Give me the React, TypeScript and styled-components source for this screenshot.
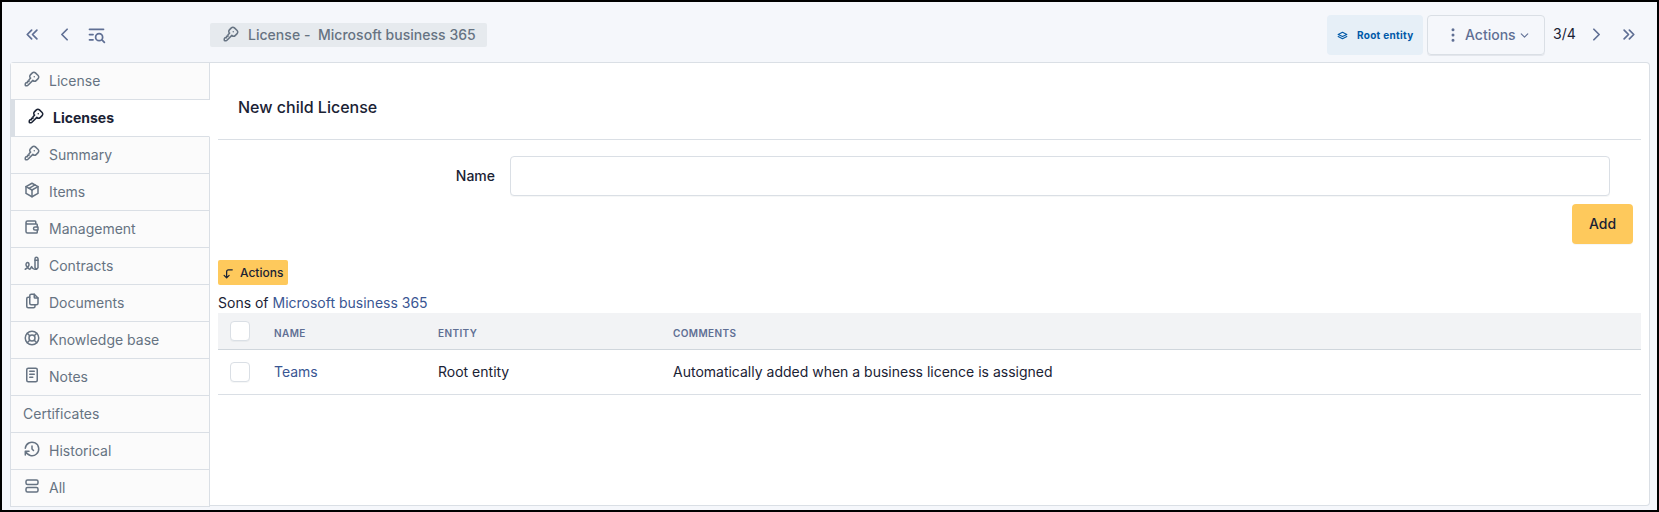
import React from "react";
import styled, { createGlobalStyle, css } from "styled-components";
import {
  TbChevronDown,
  TbChevronLeft,
  TbChevronRight,
  TbChevronsLeft,
  TbChevronsRight,
  TbCornerLeftDown,
  TbDotsVertical,
  TbFiles,
  TbHistory,
  TbKey,
  TbLayoutList,
  TbLifebuoy,
  TbListSearch,
  TbNotes,
  TbPackage,
  TbStack,
  TbWallet,
  TbWritingSign,
} from "react-icons/tb";

const border = "#dadfe5";
const muted = "#667382";
const slate = "#5f6f94";
const ink = "#1a2234";
const amber = "#fec95c";

const GlobalStyle = createGlobalStyle`
  *, *::before, *::after { box-sizing: border-box; }
  body {
    margin: 0;
    font-family: Inter, "Liberation Sans", sans-serif;
    font-size: 14px;
    line-height: 20px;
    color: ${ink};
  }
  svg { display: block; flex: none; }
`;

const Page = styled.div`
  display: flex;
  flex-direction: column;
  width: 1659px;
  height: 512px;
  padding: 0 7px 0 8px;
  border: 2px solid #000;
  background: #f5f7fb;
  overflow: hidden;
`;

const Header = styled.header`
  display: flex;
  align-items: center;
  height: 60px;
  flex: none;
  padding: 6px 11px 0 12px;
`;

const NavIcons = styled.div`
  display: flex;
  align-items: center;
  width: 188px;
  padding-bottom: 1px;
  color: ${slate};
`;

const NavButton = styled.a<{ $gap?: number; $lift?: boolean }>`
  margin-right: ${(p) => p.$gap ?? 0}px;
  padding-bottom: ${(p) => (p.$lift ? 2 : 0)}px;
`;

const TitleTag = styled.div`
  display: flex;
  align-items: center;
  height: 24px;
  width: 277px;
  padding-left: 12px;
  border-radius: 2px;
  background: #e6eaee;
  color: ${muted};
  font-weight: 500;
  letter-spacing: 0.03px;
  white-space: pre;
  svg { margin-right: 8px; position: relative; top: -1px; }
`;

const HeaderRight = styled.div`
  display: flex;
  align-items: center;
  margin-left: auto;
  color: ${slate};
`;

const EntityBadge = styled.div`
  display: flex;
  align-items: center;
  width: 96px;
  height: 40px;
  padding-left: 9px;
  gap: 8px;
  border-radius: 4px;
  background: #e6eff7;
  color: #0059a8;
  font-size: 10px;
  font-weight: 700;
  letter-spacing: 0.3px;
  white-space: nowrap;
`;

const ActionsMenu = styled.button`
  display: flex;
  align-items: center;
  width: 118px;
  height: 40px;
  margin: 0 8px 0 4px;
  padding: 0 0 0 16px;
  border: 1px solid ${border};
  border-radius: 4px;
  background: transparent;
  box-shadow: 0 1px 0 rgba(30, 41, 59, 0.08);
  color: ${slate};
  font: inherit;
  font-weight: 500;
`;

const ActionsLabel = styled.span`
  margin: 0 2px 0 3px;
`;

const Counter = styled.span`
  width: 33px;
  padding-bottom: 2px;
  color: ${ink};
`;

const Body = styled.div`
  display: flex;
  flex: none;
  height: 445px;
`;

const Sidebar = styled.nav`
  width: 200px;
  flex: none;
  border: 1px solid ${border};
  border-width: 1px 0 0 1px;
  border-radius: 4px 0 0 0;
`;

const Tab = styled.a<{ $active?: boolean }>`
  display: flex;
  align-items: center;
  height: 37px;
  padding-left: 12px;
  gap: 8px;
  border-right: 1px solid ${border};
  border-bottom: 1px solid ${border};
  background: #fbfbfb;
  color: ${muted};
  svg { position: relative; top: -2px; }
  ${(p) =>
    p.$active &&
    css`
      border-left: 4px solid ${border};
      border-right-color: #fff;
      background: #fff;
      color: ${ink};
      font-weight: 700;
    `}
`;

const Panel = styled.main`
  flex: 1;
  height: 444px;
  padding: 0 8px;
  border: 1px solid ${border};
  border-left: 0;
  border-radius: 0 4px 4px 0;
  background: #fff;
`;

const FormTitle = styled.h3`
  display: flex;
  align-items: center;
  height: 77px;
  margin: 0;
  padding: 12px 0 0 20px;
  border-bottom: 1px solid ${border};
  font-size: 16px;
  font-weight: 450;
`;

const FieldRow = styled.div`
  display: flex;
  align-items: center;
  justify-content: flex-end;
  gap: 15px;
  padding: 16px 31px 0 0;
`;

const FieldLabel = styled.label`
  font-weight: 450;
`;

const TextInput = styled.input`
  width: 1100px;
  height: 40px;
  border: 1px solid ${border};
  border-radius: 4px;
  background: #fff;
  box-shadow: 0 1px 0 rgba(30, 41, 59, 0.04);
`;

const SubmitRow = styled.div`
  display: flex;
  justify-content: flex-end;
  padding: 8px 8px 0 0;
`;

const AddButton = styled.button`
  width: 61px;
  height: 40px;
  padding: 0;
  border: 0;
  border-radius: 4px;
  background: ${amber};
  box-shadow: 0 1px 0 rgba(30, 41, 59, 0.04);
  color: ${ink};
  font: inherit;
  font-weight: 500;
`;

const BulkActions = styled.button`
  display: flex;
  align-items: center;
  width: 70px;
  height: 25px;
  margin-top: 16px;
  padding: 0 0 0 3px;
  gap: 4px;
  border: 0;
  border-radius: 2px;
  background: ${amber};
  color: ${ink};
  font: inherit;
  font-size: 12px;
  font-weight: 450;
  svg { position: relative; top: 1px; }
`;

const Caption = styled.div`
  height: 28px;
  padding-top: 8px;
`;

const Link = styled.a`
  color: #3a5693;
`;

const Row = styled.div<{ $head?: boolean }>`
  display: grid;
  grid-template-columns: 56px 164px 235px 1fr;
  align-items: center;
  height: ${(p) => (p.$head ? 37 : 45)}px;
  border-bottom: 1px solid ${(p) => (p.$head ? "#d0d6dc" : border)};
  ${(p) =>
    p.$head &&
    css`
      background: #f2f3f5;
      color: ${slate};
      font-size: 10px;
      font-weight: 600;
      letter-spacing: 0.4px;
      text-transform: uppercase;
      padding-top: 3px;
    `}
`;

const Checkbox = styled.input<{ $raise?: boolean }>`
  appearance: none;
  width: 20px;
  height: 20px;
  margin: 0 0 ${(p) => (p.$raise ? 4 : 0)}px 12px;
  border: 1px solid ${border};
  border-radius: 4px;
  background: #fff;
  box-shadow: 0 1px 0 rgba(30, 41, 59, 0.04);
`;

const tabs = [
  { label: "License", Icon: TbKey },
  { label: "Licenses", Icon: TbKey, active: true },
  { label: "Summary", Icon: TbKey },
  { label: "Items", Icon: TbPackage },
  { label: "Management", Icon: TbWallet },
  { label: "Contracts", Icon: TbWritingSign },
  { label: "Documents", Icon: TbFiles },
  { label: "Knowledge base", Icon: TbLifebuoy },
  { label: "Notes", Icon: TbNotes },
  { label: "Certificates" },
  { label: "Historical", Icon: TbHistory },
  { label: "All", Icon: TbLayoutList },
];

export default function App() {
  return (
    <Page>
      <GlobalStyle />
      <Header>
        <NavIcons>
          <NavButton $gap={11}><TbChevronsLeft size={21} /></NavButton>
          <NavButton $gap={11}><TbChevronLeft size={21} /></NavButton>
          <NavButton><TbListSearch size={21} /></NavButton>
        </NavIcons>
        <TitleTag>
          <TbKey size={18} />
          {"License -  Microsoft business 365"}
        </TitleTag>
        <HeaderRight>
          <EntityBadge>
            <TbStack size={13} />
            Root entity
          </EntityBadge>
          <ActionsMenu>
            <TbDotsVertical size={18} />
            <ActionsLabel>Actions</ActionsLabel>
            <TbChevronDown size={13} />
          </ActionsMenu>
          <Counter>3/4</Counter>
          <NavButton $gap={11} $lift><TbChevronRight size={21} /></NavButton>
          <NavButton $lift><TbChevronsRight size={21} /></NavButton>
        </HeaderRight>
      </Header>
      <Body>
        <Sidebar>
          {tabs.map(({ label, Icon, active }) => (
            <Tab key={label} $active={active}>
              {Icon && <Icon size={18} />}
              {label}
            </Tab>
          ))}
        </Sidebar>
        <Panel>
          <FormTitle>New child License</FormTitle>
          <FieldRow>
            <FieldLabel htmlFor="name">Name</FieldLabel>
            <TextInput id="name" />
          </FieldRow>
          <SubmitRow>
            <AddButton>Add</AddButton>
          </SubmitRow>
          <BulkActions>
            <TbCornerLeftDown size={15} />
            Actions
          </BulkActions>
          <Caption>
            Sons of <Link>Microsoft business 365</Link>
          </Caption>
          <Row $head>
            <Checkbox type="checkbox" $raise />
            <span>Name</span>
            <span>Entity</span>
            <span>Comments</span>
          </Row>
          <Row>
            <Checkbox type="checkbox" />
            <Link>Teams</Link>
            <span>Root entity</span>
            <span>Automatically added when a business licence is assigned</span>
          </Row>
        </Panel>
      </Body>
    </Page>
  );
}
